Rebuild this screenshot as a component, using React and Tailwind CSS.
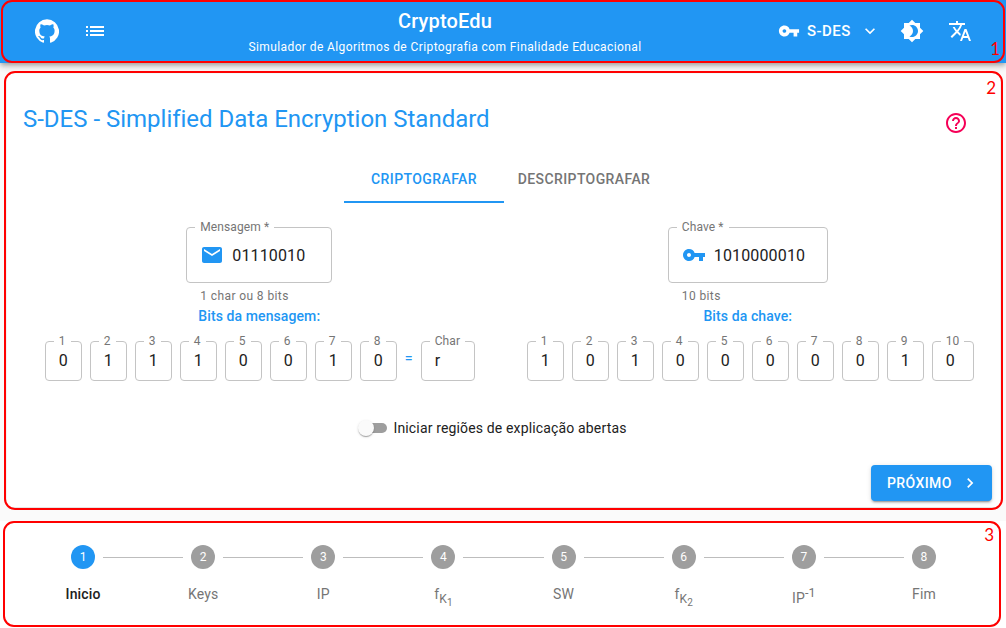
import React from "react";
import {
  MdList,
  MdVpnKey,
  MdExpandMore,
  MdBrightness4,
  MdTranslate,
  MdHelpOutline,
  MdEmail,
  MdNavigateNext,
} from "react-icons/md";

const GithubIcon = () => (
  <svg viewBox="0 0 24 24" className="size-6" fill="currentColor">
    <path d="M12 .3a12 12 0 0 0-3.8 23.4c.6.1.8-.3.8-.6v-2c-3.3.7-4-1.6-4-1.6-.6-1.4-1.4-1.8-1.4-1.8-1-.7.1-.7.1-.7 1.2 0 1.9 1.2 1.9 1.2 1 1.8 2.8 1.3 3.5 1 0-.8.4-1.3.7-1.6-2.7-.3-5.5-1.3-5.5-6 0-1.2.5-2.3 1.3-3.1-.2-.4-.6-1.6 0-3.2 0 0 1-.3 3.4 1.2a11.5 11.5 0 0 1 6 0c2.3-1.5 3.3-1.2 3.3-1.2.6 1.6.2 2.8 0 3.2.9.8 1.3 1.9 1.3 3.2 0 4.6-2.8 5.6-5.5 5.9.5.4.9 1 .9 2.2v3.3c0 .3.1.7.8.6A12 12 0 0 0 12 .3" />
  </svg>
);

const IconButton = ({ label, children }) => (
  <button aria-label={label} className="flex size-12 items-center justify-center">
    {children}
  </button>
);

const Header = () => (
  <header className="relative flex h-[63px] shrink-0 items-center bg-[#2196f3] pr-[22px] pb-px pl-[23px] text-white shadow-[0_2px_4px_-1px_rgba(0,0,0,0.2),0_4px_5px_0_rgba(0,0,0,0.14),0_1px_10px_0_rgba(0,0,0,0.12)]">
    <IconButton label="GitHub">
      <GithubIcon />
    </IconButton>
    <IconButton label="Menu">
      <MdList className="size-6" />
    </IconButton>
    <div className="flex-1 pl-px text-center">
      <h1 className="text-xl leading-8 font-medium tracking-[0.0075em]">CryptoEdu</h1>
      <p className="text-xs leading-5 tracking-[0.0333em]">
        Simulador de Algoritmos de Criptografia com Finalidade Educacional
      </p>
    </div>
    <button className="flex w-[118px] items-center pl-2 text-[15px] font-medium tracking-[0.02857em]">
      <MdVpnKey className="mr-[7px] size-[22px]" />
      S-DES
      <MdExpandMore className="ml-[9px] size-5" />
    </button>
    <IconButton label="Tema">
      <MdBrightness4 className="size-6" />
    </IconButton>
    <IconButton label="Idioma">
      <MdTranslate className="size-6" />
    </IconButton>
  </header>
);

const Field = ({ label, value, icon, hint, width }) => (
  <div className={width}>
    <fieldset className="h-[63px] rounded-[4px] border border-[#c4c4c4] pl-[13px]">
      <legend className="-ml-[5px] h-[15px] px-[5px] text-xs leading-[15px] tracking-[0.00938em] text-[#757575]">
        {label}
      </legend>
      <div className="flex h-[41px] items-center gap-2 text-base tracking-[0.00938em] text-[#212121]">
        <span className="pb-0.5 text-[#2196f3]">{icon}</span>
        {value}
      </div>
    </fieldset>
    <p className="mt-[3px] ml-[14px] text-xs leading-5 tracking-[0.0333em] text-[#757575]">{hint}</p>
  </div>
);

const Bit = ({ label, value, width = "w-[37px]" }) => (
  <fieldset className={`mx-1 h-[47px] rounded-[4px] border border-[#c4c4c4] pl-[13px] ${width}`}>
    <legend className="-ml-[5px] h-[15px] px-[5px] text-xs leading-[15px] tracking-[0.00938em] text-[#757575]">
      {label}
    </legend>
    <div className="flex h-[23px] items-center text-base tracking-[0.00938em] text-[#212121]">{value}</div>
  </fieldset>
);

const Bits = ({ bits, children }) => (
  <div className="mt-2 flex">
    {bits.split("").map((bit, i) => (
      <Bit key={i} label={i + 1} value={bit} width={i === 9 ? "w-[42px]" : "w-[37px]"} />
    ))}
    {children}
  </div>
);

const Sub = ({ children, className = "text-[12px]" }) => (
  <sub className={`static align-sub leading-[1.43] ${className}`}>{children}</sub>
);

const steps = [
  "Inicio",
  "Keys",
  "IP",
  <>
    f<Sub>K<Sub className="text-[10px]">1</Sub></Sub>
  </>,
  "SW",
  <>
    f<Sub>K<Sub className="text-[10px]">2</Sub></Sub>
  </>,
  <>
    IP<sup className="static align-super text-[12.5px] leading-[1.43]">-1</sup>
  </>,
  "Fim",
];

const Stepper = () => (
  <nav className="flex h-[107px] shrink-0 bg-white pt-6 pr-[22px] pl-[23px]">
    {steps.map((label, i) => (
      <div key={i} className="flex flex-1 flex-col items-center">
        <div className="flex w-full items-center gap-2">
          <span className={`h-px flex-1 ${i > 0 ? "bg-[#bdbdbd]" : ""}`} />
          <span
            className={`flex size-6 items-center justify-center rounded-full text-xs text-white ${
              i === 0 ? "bg-[#2196f3]" : "bg-[#9e9e9e]"
            }`}
          >
            {i + 1}
          </span>
          <span className={`h-px flex-1 ${i < steps.length - 1 ? "bg-[#bdbdbd]" : ""}`} />
        </div>
        <div
          className={`mt-[15px] text-sm leading-[1.43] tracking-[0.01071em] ${
            i === 0 ? "font-medium text-[#212121]" : "text-[#757575]"
          }`}
        >
          {label}
        </div>
      </div>
    ))}
  </nav>
);

const Region = ({ number, className, numberClass }) => (
  <div className={`pointer-events-none absolute rounded-[11px] border-2 border-[#ff0000] ${className}`}>
    <span
      className={`absolute font-['Lato',sans-serif] text-[17px] leading-5 text-[#ff0000] ${numberClass}`}
    >
      {number}
    </span>
  </div>
);

export default function App() {
  return (
    <div className="relative flex h-[628px] w-[1006px] flex-col overflow-hidden bg-[#fafafa] font-['Roboto',sans-serif]">
      <Header />
      <main className="mt-[11px] mr-[6px] mb-[14px] ml-[7px] flex flex-1 flex-col rounded bg-white px-2 shadow-[0_1px_2px_rgba(0,0,0,0.12)]">
        <div className="flex items-center justify-between pt-7 pr-6 pl-2">
          <h2 className="text-2xl leading-[34px] tracking-[-0.01px] text-[#2196f3]">
            S-DES - Simplified Data Encryption Standard
          </h2>
          <MdHelpOutline className="mt-2 size-6 text-[#f50057]" />
        </div>
        <div className="mt-[19px] flex justify-center pl-px text-sm font-medium tracking-[0.02857em]">
          <div className="flex h-12 w-40 items-center justify-center border-b-2 border-[#2196f3] pt-0.5 text-[#2196f3]">
            CRIPTOGRAFAR
          </div>
          <div className="flex h-12 w-40 items-center justify-center text-[#757575]">DESCRIPTOGRAFAR</div>
        </div>
        <div className="mt-[17px] grid grid-cols-2">
          <section className="flex flex-col items-center">
            <Field
              label="Mensagem *"
              value="01110010"
              icon={<MdEmail className="size-6" />}
              hint="1 char ou 8 bits"
              width="w-[146px]"
            />
            <h3 className="text-sm leading-5 font-medium tracking-[0.00714em] text-[#2196f3]">Bits da mensagem:</h3>
            <div className="pl-px">
              <Bits bits="01110010">
                <span className="mt-[14px] px-1 text-sm leading-5 font-medium text-[#2196f3]">=</span>
                <Bit label="Char" value="r" width="w-[54px]" />
              </Bits>
            </div>
          </section>
          <section className="flex flex-col items-center">
            <Field
              label="Chave *"
              value="1010000010"
              icon={<MdVpnKey className="size-6" />}
              hint="10 bits"
              width="w-[160px]"
            />
            <h3 className="text-sm leading-5 font-medium tracking-[0.00714em] text-[#2196f3]">Bits da chave:</h3>
            <div className="pl-[5px]">
              <Bits bits="1010000010" />
            </div>
          </section>
        </div>
        <div className="mt-[37px] flex items-center justify-center pr-[22px]">
          <span className="mr-[6px] flex h-[10px] w-[29px] items-center rounded-full">
            <span className="relative z-10 size-4 shrink-0 rounded-full bg-[#fafafa] shadow-[0_2px_1px_-1px_rgba(0,0,0,0.2),0_1px_1px_0_rgba(0,0,0,0.14),0_1px_3px_0_rgba(0,0,0,0.12)]" />
            <span className="-ml-3 h-[10px] w-[25px] shrink-0 rounded-full bg-[#9e9e9e]" />
          </span>
          <span className="text-sm leading-5 tracking-[0.01071em] text-[#212121]">
            Iniciar regiões de explicação abertas
          </span>
        </div>
        <div className="mt-[27px] flex justify-end">
          <button className="flex h-9 w-[121px] items-center rounded bg-[#2196f3] pl-4 text-sm font-medium tracking-[0.02857em] text-white shadow-[0_3px_1px_-2px_rgba(0,0,0,0.2),0_2px_2px_0_rgba(0,0,0,0.14),0_1px_5px_0_rgba(0,0,0,0.12)]">
            PRÓXIMO
            <MdNavigateNext className="ml-2 size-5" />
          </button>
        </div>
      </main>
      <Stepper />

      <Region number="1" className="top-0 left-px h-[63px] w-[1004px]" numberClass="right-[3px] bottom-0.5" />
      <Region number="2" className="top-[71px] left-1 h-[439px] w-[999px]" numberClass="top-[5px] right-[5px]" />
      <Region number="3" className="top-[521px] left-[3px] h-[106px] w-[998px]" numberClass="top-0.5 right-[5px]" />
    </div>
  );
}
